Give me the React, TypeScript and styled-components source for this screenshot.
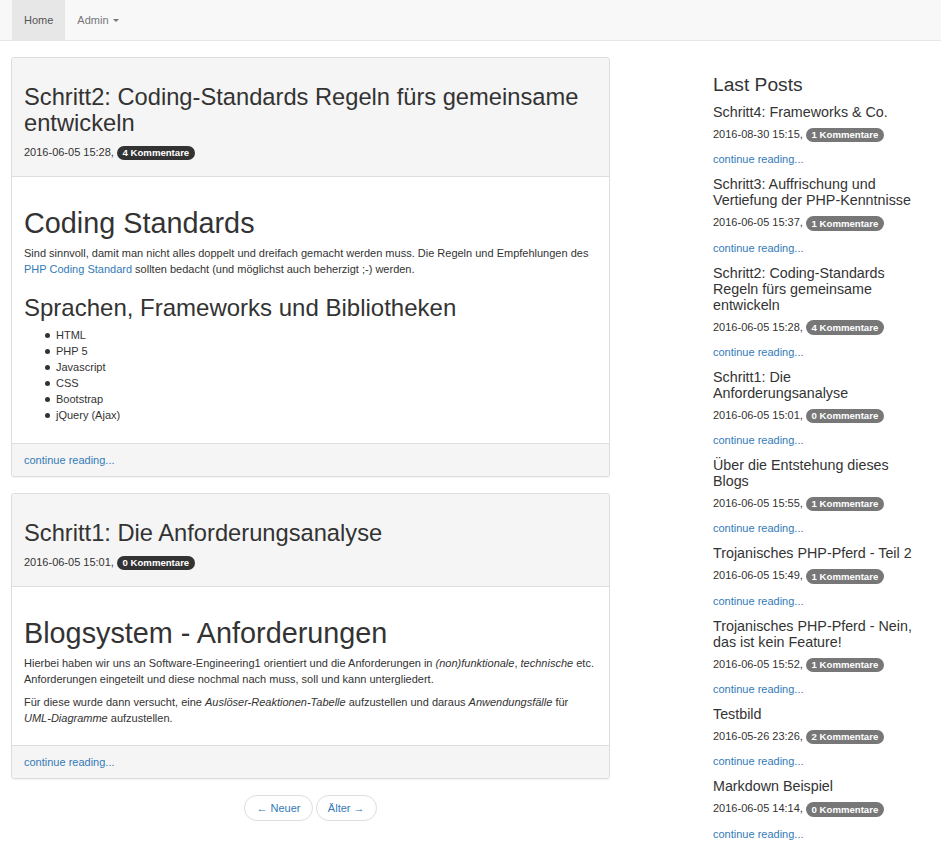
import React from 'react';
import styled, { createGlobalStyle } from 'styled-components';

const GlobalStyle = createGlobalStyle`
  html, body {
    margin: 0;
    padding: 0;
    background: #fff;
  }
  body {
    font-family: "Liberation Sans", Arial, sans-serif;
    font-size: 11px;
    line-height: 16px;
    color: #333;
  }
  * {
    box-sizing: border-box;
  }
`;

interface Post {
  title: string;
  date: string;
  comments: number;
}

const lastPosts: Post[] = [
  { title: 'Schritt4: Frameworks & Co.', date: '2016-08-30 15:15', comments: 1 },
  { title: 'Schritt3: Auffrischung und Vertiefung der PHP-Kenntnisse', date: '2016-06-05 15:37', comments: 1 },
  { title: 'Schritt2: Coding-Standards Regeln fürs gemeinsame entwickeln', date: '2016-06-05 15:28', comments: 4 },
  { title: 'Schritt1: Die Anforderungsanalyse', date: '2016-06-05 15:01', comments: 0 },
  { title: 'Über die Entstehung dieses Blogs', date: '2016-06-05 15:55', comments: 1 },
  { title: 'Trojanisches PHP-Pferd - Teil 2', date: '2016-06-05 15:49', comments: 1 },
  { title: 'Trojanisches PHP-Pferd - Nein, das ist kein Feature!', date: '2016-06-05 15:52', comments: 1 },
  { title: 'Testbild', date: '2016-05-26 23:26', comments: 2 },
  { title: 'Markdown Beispiel', date: '2016-06-05 14:14', comments: 0 },
];

const technologies = ['HTML', 'PHP 5', 'Javascript', 'CSS', 'Bootstrap', 'jQuery (Ajax)'];

export default function App() {
  return (
    <>
      <GlobalStyle />
      <Navbar>
        <NavList>
          <NavItem $active>Home</NavItem>
          <NavItem>
            Admin <Caret />
          </NavItem>
        </NavList>
      </Navbar>

      <Layout>
        <MainColumn>
          <Panel>
            <PanelHeading>
              <PostTitle>Schritt2: Coding-Standards Regeln fürs gemeinsame entwickeln</PostTitle>
              <Meta>
                2016-06-05 15:28, <Badge $dark>4 Kommentare</Badge>
              </Meta>
            </PanelHeading>
            <PanelBody>
              <H1>Coding Standards</H1>
              <P>
                Sind sinnvoll, damit man nicht alles doppelt und dreifach gemacht werden muss. Die Regeln und
                Empfehlungen des <Link href="#">PHP Coding Standard</Link> sollten bedacht (und möglichst auch
                beherzigt ;-) werden.
              </P>
              <H2>Sprachen, Frameworks und Bibliotheken</H2>
              <List>
                {technologies.map((t) => (
                  <li key={t}>{t}</li>
                ))}
              </List>
            </PanelBody>
            <PanelFooter>
              <Link href="#">continue reading...</Link>
            </PanelFooter>
          </Panel>

          <Panel>
            <PanelHeading>
              <PostTitle>Schritt1: Die Anforderungsanalyse</PostTitle>
              <Meta>
                2016-06-05 15:01, <Badge $dark>0 Kommentare</Badge>
              </Meta>
            </PanelHeading>
            <PanelBody>
              <H1>Blogsystem - Anforderungen</H1>
              <P>
                Hierbei haben wir uns an Software-Engineering1 orientiert und die Anforderungen in{' '}
                <em>(non)funktionale</em>, <em>technische</em> etc. Anforderungen eingeteilt und diese nochmal nach
                muss, soll und kann untergliedert.
              </P>
              <P>
                Für diese wurde dann versucht, eine <em>Auslöser-Reaktionen-Tabelle</em> aufzustellen und daraus{' '}
                <em>Anwendungsfälle</em> für <em>UML-Diagramme</em> aufzustellen.
              </P>
            </PanelBody>
            <PanelFooter>
              <Link href="#">continue reading...</Link>
            </PanelFooter>
          </Panel>

          <Pager>
            <PagerButton href="#">&larr; Neuer</PagerButton>
            <PagerButton href="#">Älter &rarr;</PagerButton>
          </Pager>
        </MainColumn>

        <Sidebar>
          <SidebarTitle>Last Posts</SidebarTitle>
          {lastPosts.map((post) => (
            <div key={post.title}>
              <SidebarPostTitle>{post.title}</SidebarPostTitle>
              <SidebarMeta>
                {post.date}, <Badge>{post.comments} Kommentare</Badge>
              </SidebarMeta>
              <SidebarMore>
                <Link href="#">continue reading...</Link>
              </SidebarMore>
            </div>
          ))}
        </Sidebar>
      </Layout>
    </>
  );
}

const Navbar = styled.nav`
  height: 41px;
  background: #f8f8f8;
  border-bottom: 1px solid #e7e7e7;
  padding: 0 12px;
  margin-bottom: 16px;
`;

const NavList = styled.div`
  display: flex;
  height: 40px;
`;

const NavItem = styled.a<{ $active?: boolean }>`
  display: flex;
  align-items: center;
  gap: 4px;
  padding: 0 12px;
  height: 40px;
  color: ${(p) => (p.$active ? '#555' : '#777')};
  background: ${(p) => (p.$active ? '#e7e7e7' : 'transparent')};
  text-decoration: none;
  cursor: pointer;
`;

const Caret = styled.span`
  display: inline-block;
  width: 0;
  height: 0;
  border-top: 3.2px solid #777;
  border-left: 3.2px solid transparent;
  border-right: 3.2px solid transparent;
  margin-top: 1px;
`;

const Layout = styled.div`
  display: flex;
  align-items: flex-start;
  padding-left: 11px;
  gap: 103px;
`;

const MainColumn = styled.main`
  width: 599px;
  flex-shrink: 0;
`;

const Panel = styled.article`
  background: #fff;
  border: 1px solid #ddd;
  border-radius: 3px;
  box-shadow: 0 1px 1px rgba(0, 0, 0, 0.05);
  margin-bottom: 16px;
`;

const PanelHeading = styled.header`
  background: #f5f5f5;
  border-bottom: 1px solid #ddd;
  border-radius: 3px 3px 0 0;
  padding: 8px 12px;
  display: flow-root;
`;

const PostTitle = styled.h2`
  font-size: 23.7px;
  line-height: 26.4px;
  font-weight: 500;
  margin: 18px 0 7px;
  color: #333;
`;

const Meta = styled.p`
  margin: 0 0 8px;
`;

const PanelBody = styled.div`
  padding: 12px;
  display: flow-root;
`;

const H1 = styled.h1`
  font-size: 28.8px;
  line-height: 31.7px;
  font-weight: 500;
  margin: 19px 0 5px;
`;

const H2 = styled.h2`
  font-size: 24px;
  line-height: 26.4px;
  font-weight: 500;
  margin: 18px 0 6px;
`;

const P = styled.p`
  margin: 0 0 7px;
`;

const List = styled.ul`
  margin: 0 0 8px;
  padding-left: 32px;
  list-style: none;

  li::before {
    content: '';
    display: inline-block;
    width: 5px;
    height: 5px;
    border-radius: 50%;
    background: #333;
    margin-left: -11px;
    margin-right: 6px;
    vertical-align: 1px;
  }
`;

const PanelFooter = styled.footer`
  background: #f5f5f5;
  border-top: 1px solid #ddd;
  border-radius: 0 0 3px 3px;
  padding: 8px 12px;
`;

const Link = styled.a`
  color: #337ab7;
  text-decoration: none;
`;

const Badge = styled.span<{ $dark?: boolean }>`
  display: inline-block;
  min-width: 8px;
  padding: 2.4px 5.6px;
  font-size: 9.6px;
  font-weight: bold;
  line-height: 1;
  color: #fff;
  text-align: center;
  white-space: nowrap;
  vertical-align: middle;
  background: ${(p) => (p.$dark ? '#333' : '#777')};
  border-radius: 8px;
`;

const Pager = styled.nav`
  display: flex;
  justify-content: center;
  gap: 3px;
  margin: 16px 0;
`;

const PagerButton = styled.a`
  display: inline-block;
  padding: 4px 11.2px;
  height: 26px;
  background: #fff;
  border: 1px solid #ddd;
  border-radius: 12.8px;
  color: #337ab7;
  text-decoration: none;
`;

const Sidebar = styled.aside`
  width: 210px;
  flex-shrink: 0;
`;

const SidebarTitle = styled.h3`
  font-size: 19.2px;
  line-height: 22px;
  font-weight: 500;
  margin: 17px 0 7px;
`;

const SidebarPostTitle = styled.h4`
  font-size: 14.3px;
  line-height: 16px;
  font-weight: 500;
  margin: 8px 0 6px;
`;

const SidebarMeta = styled.p`
  margin: 0 0 9px;
`;

const SidebarMore = styled.p`
  margin: 0 0 9px;
`;
